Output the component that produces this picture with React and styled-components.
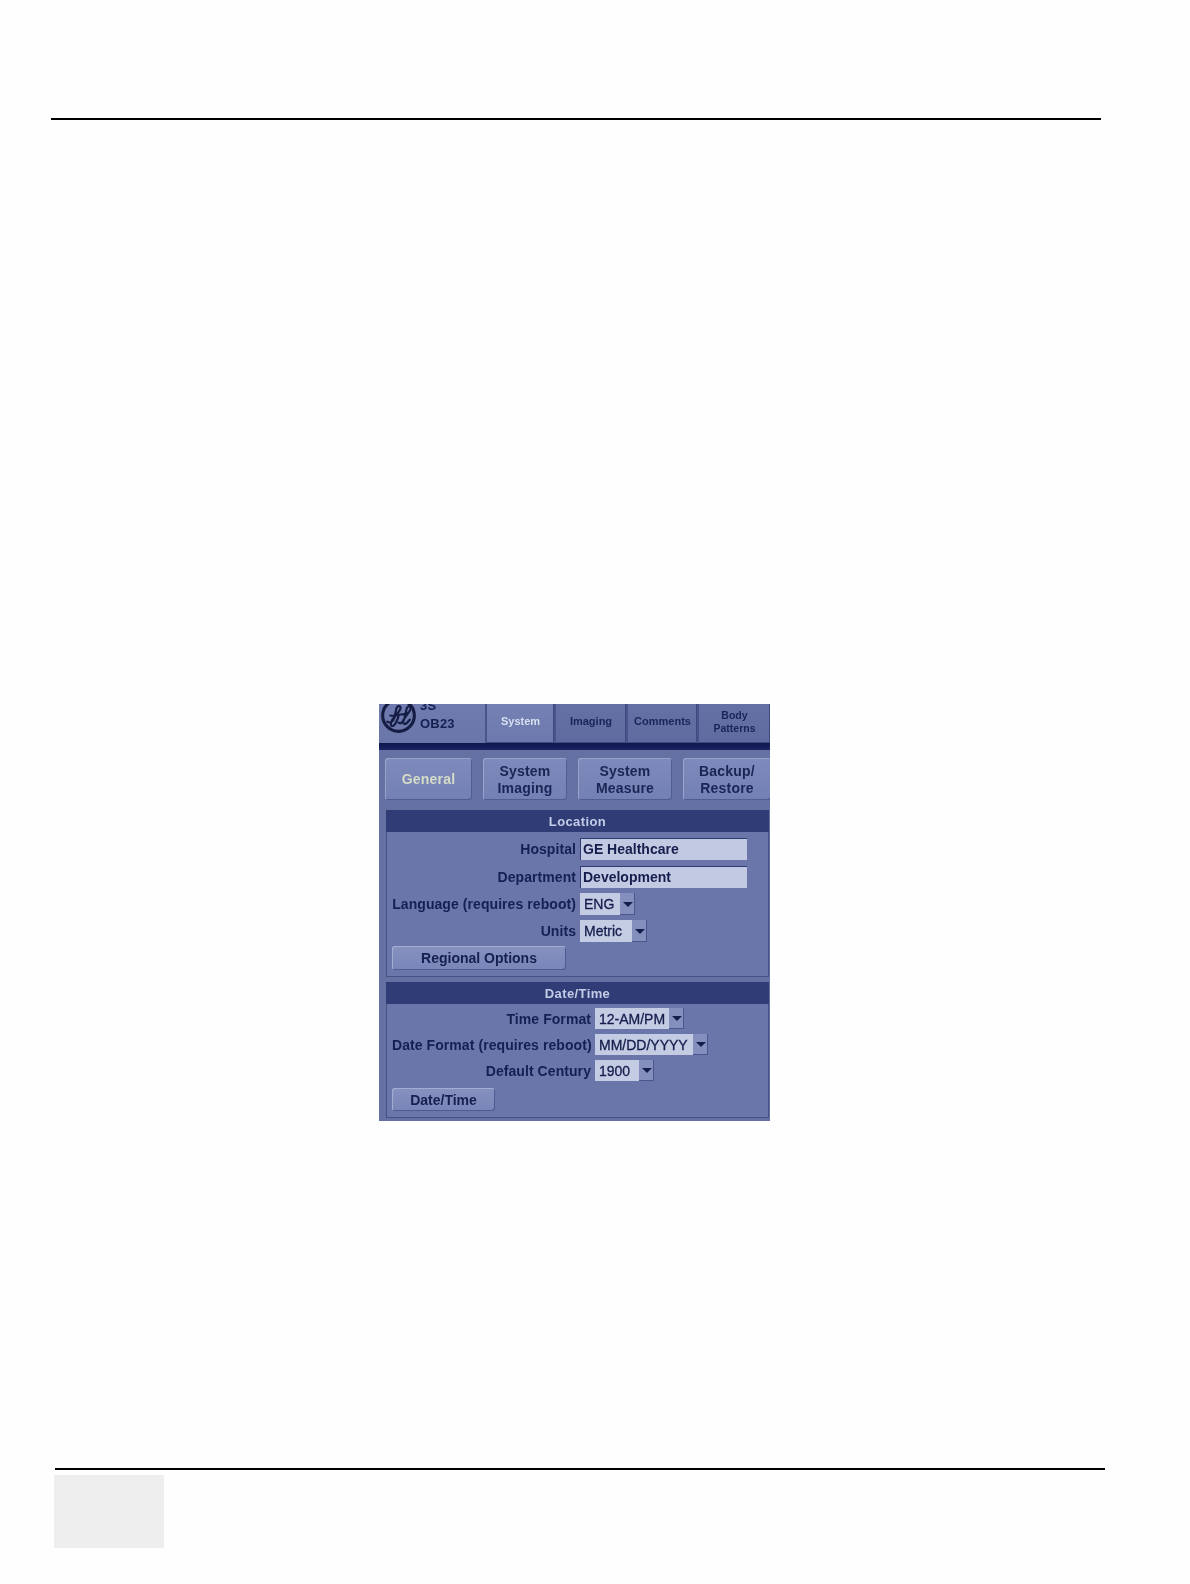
import React from "react";
import styled, { createGlobalStyle } from "styled-components";

const GlobalStyle = createGlobalStyle`
  html, body {
    margin: 0;
    padding: 0;
    background: #fefefe;
  }
`;

const Page = styled.div`
  width: 1190px;
  height: 1584px;
  overflow: hidden;
  padding-top: 118px;
  box-sizing: border-box;
  display: flex;
  flex-direction: column;
`;

const Rule = styled.div`
  height: 2px;
  background: #000;
  width: 1050px;
  margin-left: ${props => props.$left}px;
`;

const Panel = styled.div`
  width: 391px;
  height: 417px;
  margin: 584px 0 347px 379px;
  background: #6570a3;
  overflow: hidden;
  font-family: "Liberation Sans", Arial, sans-serif;
  font-weight: 700;
  color: #151f50;
  filter: blur(0.55px);
`;

const TabStrip = styled.div`
  height: 39px;
  display: flex;
  gap: 2px;
  background: #4a5488;
`;

const LogoCell = styled.div`
  width: 106px;
  display: flex;
  gap: 4px;
  padding-left: 2px;
  box-sizing: border-box;
  background: linear-gradient(#6f7bae, #6a75a8);
  overflow: hidden;
`;

const Logo = styled.svg`
  width: 35px;
  height: 35px;
  margin-top: -6px;
  flex: none;
`;

const Model = styled.div`
  font-size: 13px;
  line-height: 18px;
  margin-top: -7px;
  letter-spacing: 0.2px;
`;

const Tab = styled.div`
  width: ${props => props.$w}px;
  padding-bottom: 4px;
  box-sizing: border-box;
  display: flex;
  align-items: center;
  justify-content: center;
  text-align: center;
  font-size: ${props => (props.$small ? 10.5 : 11)}px;
  line-height: 13px;
  color: ${props => (props.$active ? "#d8dff0" : "#1a2455")};
  background: ${props =>
    props.$active
      ? "linear-gradient(#7581b4, #6d79ad)"
      : "linear-gradient(#6571a5, #5f6b9f)"};
  box-shadow: inset -1px -1px 0 #3f4a80;
`;

const DarkBar = styled.div`
  height: 7px;
  background: linear-gradient(#10174f, #1b2561);
`;

const SubTabs = styled.div`
  display: flex;
  padding: 8px 0 0 6px;
  height: 42px;
`;

const SubTab = styled.div`
  width: ${props => props.$w}px;
  margin-right: ${props => props.$gap || 0}px;
  padding-top: 1px;
  box-sizing: border-box;
  flex: none;
  display: flex;
  align-items: center;
  justify-content: center;
  text-align: center;
  font-size: 14px;
  line-height: 17px;
  letter-spacing: 0.2px;
  color: ${props => (props.$active ? "#d5dcc8" : "#1a2455")};
  background: linear-gradient(#7e8abb, #7380b3);
  border-radius: 3px;
  box-shadow: inset 1px 1px 0 #98a3cc, inset -1px -1px 0 #515c92;
`;

const Section = styled.div`
  margin: ${props => props.$top}px 1px 0 7px;
  height: ${props => props.$h}px;
  background: #6a76a9;
  box-shadow: inset 0 0 0 1px #465186;
  display: flex;
  flex-direction: column;
  box-sizing: border-box;
`;

const SectionTitle = styled.div`
  height: 22px;
  flex: none;
  display: flex;
  align-items: center;
  justify-content: center;
  background: #303c76;
  color: #c3cce6;
  font-size: 13px;
  letter-spacing: 0.4px;
`;

const Rows = styled.div`
  display: flex;
  flex-direction: column;
  gap: ${props => props.$gap}px;
  padding: ${props => props.$top}px 0 0 6px;
`;

const Row = styled.div`
  display: flex;
  align-items: center;
  gap: 4px;
  height: ${props => props.$h}px;
  margin-top: ${props => props.$lift || 0}px;
`;

const Label = styled.div`
  width: ${props => props.$w}px;
  flex: none;
  text-align: right;
  font-size: 14px;
  letter-spacing: 0.07px;
  white-space: nowrap;
`;

const Input = styled.div`
  width: 167px;
  height: 100%;
  box-sizing: border-box;
  padding-left: 3px;
  display: flex;
  align-items: center;
  background: #c2cae3;
  box-shadow: inset 1px 1px 0 #2e3a72;
  font-size: 14px;
  color: #141d4c;
`;

const Select = styled.div`
  display: flex;
  height: 100%;
  font-size: 14px;
  font-weight: 400;
  -webkit-text-stroke: 0.3px #141d4c;
  color: #141d4c;
`;

const SelectValue = styled.div`
  width: ${props => props.$w}px;
  box-sizing: border-box;
  padding-left: 4px;
  display: flex;
  align-items: center;
  background: #c4cce4;
`;

const ArrowBox = styled.div`
  width: 15px;
  display: flex;
  align-items: center;
  justify-content: center;
  background: #858fbe;
  box-shadow: inset -1px -1px 0 #4b568c;
  &::after {
    content: "";
    border-left: 5px solid transparent;
    border-right: 5px solid transparent;
    border-top: 5px solid #151d4a;
  }
`;

const Button = styled.div`
  width: ${props => props.$w}px;
  height: ${props => props.$h}px;
  margin-top: ${props => props.$lift || 0}px;
  display: flex;
  align-items: center;
  justify-content: center;
  font-size: 14px;
  background: linear-gradient(#8691c0, #7985b7);
  border-radius: 3px;
  box-shadow: inset 1px 1px 0 #a3add2, inset -1px -1px 0 #4f5a90;
`;

const FooterBox = styled.div`
  width: 110px;
  height: 73px;
  margin: 5px 0 0 54px;
  background: #eeeeee;
`;

const GeLogo = () => (
  <Logo viewBox="0 0 34 34" fill="none" stroke="#161d44">
    <circle cx="17" cy="17" r="15.4" strokeWidth="3" />
    <path
      d="M6 23c3 2 6 0 7-4l2-9c1-3 4-3 4 0-1 4-6 8-8 11-2 4-2 7 1 6 3-2 4-7 5-9M17 24c3 2 5-2 6-5l2-9c1-3 4-2 4 0-1 4-5 7-7 11-1 3 0 5 2 4 2-1 3-3 4-4M9 17c4 1 7-1 10-1 3 0 6-1 8-2"
      strokeWidth="2.1"
      strokeLinecap="round"
    />
  </Logo>
);

const Dropdown = ({ width, children }) => (
  <Select>
    <SelectValue $w={width}>{children}</SelectValue>
    <ArrowBox />
  </Select>
);

const App = () => {
  return (
    <>
      <GlobalStyle />
      <Page>
        <Rule $left={51} />
        <Panel>
          <TabStrip>
            <LogoCell>
              <GeLogo />
              <Model>
                3S
                <br />
                OB23
              </Model>
            </LogoCell>
            <Tab $w={67} $active>
              System
            </Tab>
            <Tab $w={70}>Imaging</Tab>
            <Tab $w={69}>Comments</Tab>
            <Tab $w={71} $small>
              Body
              <br />
              Patterns
            </Tab>
          </TabStrip>
          <DarkBar />
          <SubTabs>
            <SubTab $w={87} $gap={11} $active>
              General
            </SubTab>
            <SubTab $w={84} $gap={11}>
              System
              <br />
              Imaging
            </SubTab>
            <SubTab $w={94} $gap={11}>
              System
              <br />
              Measure
            </SubTab>
            <SubTab $w={88}>
              Backup/
              <br />
              Restore
            </SubTab>
          </SubTabs>
          <Section $top={10} $h={167}>
            <SectionTitle>Location</SectionTitle>
            <Rows $gap={6} $top={6}>
              <Row $h={22}>
                <Label $w={184}>Hospital</Label>
                <Input>GE Healthcare</Input>
              </Row>
              <Row $h={22}>
                <Label $w={184}>Department</Label>
                <Input>Development</Input>
              </Row>
              <Row $h={22} $lift={-1}>
                <Label $w={184}>Language (requires reboot)</Label>
                <Dropdown width={40}>ENG</Dropdown>
              </Row>
              <Row $h={22} $lift={-1}>
                <Label $w={184}>Units</Label>
                <Dropdown width={52}>Metric</Dropdown>
              </Row>
              <Button $w={174} $h={24} $lift={-2}>
                Regional Options
              </Button>
            </Rows>
          </Section>
          <Section $top={5} $h={136}>
            <SectionTitle>Date/Time</SectionTitle>
            <Rows $gap={5} $top={4}>
              <Row $h={21}>
                <Label $w={199}>Time Format</Label>
                <Dropdown width={74}>12-AM/PM</Dropdown>
              </Row>
              <Row $h={21}>
                <Label $w={199}>Date Format (requires reboot)</Label>
                <Dropdown width={98}>MM/DD/YYYY</Dropdown>
              </Row>
              <Row $h={21}>
                <Label $w={199}>Default Century</Label>
                <Dropdown width={44}>1900</Dropdown>
              </Row>
              <Button $w={103} $h={23} $lift={2}>
                Date/Time
              </Button>
            </Rows>
          </Section>
        </Panel>
        <Rule $left={55} />
        <FooterBox />
      </Page>
    </>
  );
};

export default App;
